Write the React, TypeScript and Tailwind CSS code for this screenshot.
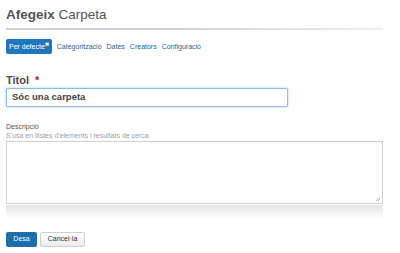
import React from "react";

export default function App() {
  const ff = { fontFamily: '"Liberation Sans", Arial, sans-serif' };
  return (
    <div className="w-[400px] h-[253px] bg-white overflow-hidden" style={ff}>
      <div className="pl-[6px] pr-[17px] pt-[5px]">
        <h1 className="text-[13.5px] leading-[20px] text-[#555]">
          <span className="font-bold">Afegeix</span> <span>Carpeta</span>
        </h1>
        <div className="mt-[3px] h-[2px] bg-gradient-to-r from-[#cfcfcf] via-[#d4d4d4] to-[#f0f0f0]" />
        <div className="mt-[9px] flex items-center gap-[5px] text-[7px] leading-[14px]">
          <span className="bg-[#1e77bd] text-white rounded-[2px] px-[3px] h-[15px] flex items-center">
            Per defecte<sup className="text-[5px] font-bold">✖</sup>
          </span>
          <span className="text-[#2a5f8f]">Categorització</span>
          <span className="text-[#2a5f8f]">Dates</span>
          <span className="text-[#2a5f8f]">Creators</span>
          <span className="text-[#2a5f8f]">Configuració</span>
        </div>
        <div className="mt-[20px] text-[11px] leading-[12px] text-[#4a4a4a] font-bold">
          Titol <span className="text-[#a3262a] ml-[3px]">*</span>
        </div>
        <div className="mt-[2px] w-[282px] h-[19px] border border-[#8dbde6] shadow-[0_0_3px_#a9d0f2] rounded-[1px] flex items-center pl-[5px] text-[9.5px] font-bold text-[#444]">
          Sóc una carpeta
        </div>
        <div className="mt-[15px] text-[7px] leading-[9px] text-[#555]">Descripció</div>
        <div className="text-[7px] leading-[9px] text-[#a0a0a0]">S'usa en llistes d'elements i resultats de cerca</div>
        <div className="mt-[1px] relative h-[63px] border border-[#cfcfcf]">
          <svg className="absolute right-[1px] bottom-[1px]" width="6" height="6" viewBox="0 0 6 6">
            <path d="M5 1 L1 5 M5 3 L3 5" stroke="#bbb" strokeWidth="1" />
          </svg>
        </div>
        <div className="mt-[1px] h-[14px] bg-gradient-to-b from-[#e6e6e6] to-white" />
        <div className="mt-[13px] flex gap-[3px] text-[7px]">
          <span className="bg-[#1e6eab] text-white rounded-[2px] w-[31px] h-[15px] flex items-center justify-center">Desa</span>
          <span className="bg-gradient-to-b from-white to-[#ececec] border border-[#cfcfcf] text-[#333] rounded-[2px] w-[45px] h-[15px] flex items-center justify-center">Cancel·la</span>
        </div>
      </div>
    </div>
  );
}
